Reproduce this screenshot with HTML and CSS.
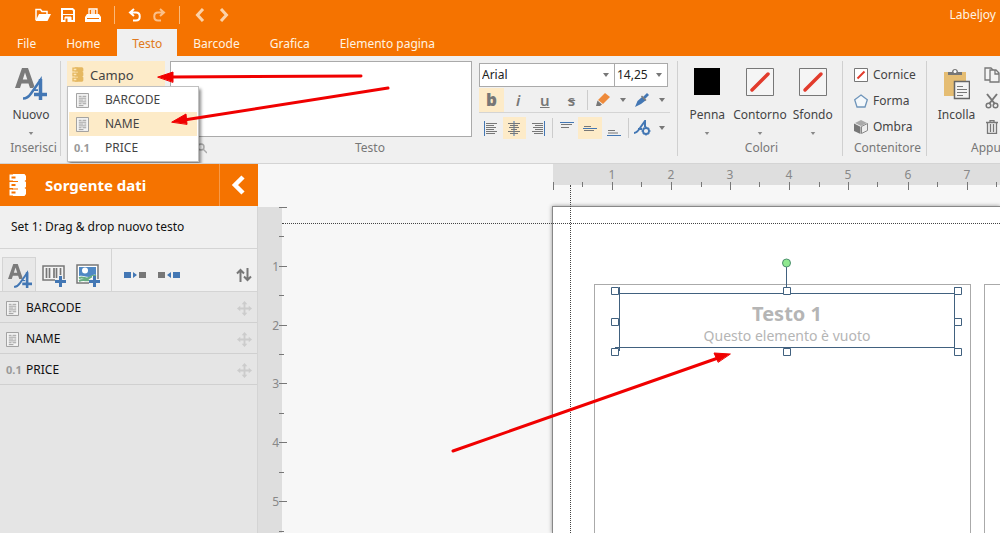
FILE: index.html
```html
<!DOCTYPE html>
<html lang="it">
<head>
<meta charset="utf-8">
<title>Labeljoy</title>
<link rel="stylesheet" href="styles.css">
</head>
<body>
<svg class="defs" aria-hidden="true">
  <symbol id="i-text-add" viewBox="0 0 32 32">
    <path d="M0 20 7 0h6l7 20h-5l-1.500-4.500h-7L5 20zM7.800 11.500h4.500L10 4.500z" fill="#7b7b7b" fill-rule="evenodd"/>
    <path d="M9 31c4 0 6-2 8-5l8-11.500V27" fill="none" stroke="#f0f0f0" stroke-width="5"/>
    <path d="M8 30.500c4 0 6-2 8-5L25.500 12v15M18 22.500h8" fill="none" stroke="#4377b4" stroke-width="2.500"/>
    <path d="M26 19v13M19 26h13" stroke="#f0f0f0" stroke-width="6"/>
    <path d="M25.500 11v21M19 26.500h13" stroke="#4377b4" stroke-width="3.500"/>
  </symbol>
  <symbol id="i-doc" viewBox="0 0 14 16">
    <path d="M.5.5h13v15H.5z" fill="#f4f4f4" stroke="#999"/>
    <path d="M3 3.500h3M7 3.500h4M3 5.500h8M3 7.500h5M9 7.500h2M3 9.500h8M3 11.500h3M7 11.500h4M3 13.500h5" stroke="#999"/>
  </symbol>
  <symbol id="i-data" viewBox="0 0 18 22">
    <path d="M4 0h11.500l1.500 2v4l-1.500 1L17 8v5l-1.500 1 1.500 1v5l-1.500 2H4z"/>
    <path d="M.5.500h8v6h-8zM.5 8h8v6h-8zM.5 15.500h8v6h-8z"/>
    <path d="M2.500 2.500h4v2h-4zM2.500 10h4v2h-4zM2.500 17.500h4v2h-4zM3 7h6v1H3zM3 14.500h6v1H3z" fill="currentColor"/>
  </symbol>
  <symbol id="i-caret" viewBox="0 0 8 4"><path d="M1 0h6L4 4z"/></symbol>
  <symbol id="i-move" viewBox="0 0 16 16"><path d="M8 0l3 3.500H9V7h3.500V5L16 8l-3.500 3V9H9v3.500h2L8 16l-3-3.500h2V9H3.500v2L0 8l3.500-3v2H7V3.500H5z"/></symbol>
  <symbol id="i-none" viewBox="0 0 28 28"><path d="M.5.5h27v27H.5z" fill="#f5f5f5" stroke="#777"/><path d="M6 22 22 6" stroke="#e23b2c" stroke-width="3.500" stroke-linecap="round"/></symbol>
</svg>

<header class="top">
  <div class="quick">
    <button aria-label="Apri"><svg width="16" height="14" viewBox="0 0 16 14"><path d="M1 12V1.500h4.500l1.500 2h5V6" fill="none" stroke="#fff" stroke-width="1.500"/><path d="M4 6h12l-3.500 7H.5z" fill="#fff"/></svg></button>
    <button aria-label="Salva"><svg width="14" height="14" viewBox="0 0 14 14"><path d="M1 1h10.500L13 2.500V13H1z" fill="none" stroke="#fff" stroke-width="2"/><path d="M2 6.500h10M4 9h6v5H4z" fill="#fff" stroke="#fff"/><path d="M5.500 10.500V14" stroke="#f57300" stroke-width="2"/></svg></button>
    <button aria-label="Stampa"><svg width="16" height="14" viewBox="0 0 16 14"><path d="M4 6V1h8v5M6 3h4M6 5h4" fill="none" stroke="#fff" stroke-width="1.300"/><path d="M2 6h12l2 3v5H0V9z" fill="#fff"/><path d="M2 10.500h12" stroke="#f57300"/></svg></button>
    <span class="bar"></span>
    <button aria-label="Annulla"><svg width="14" height="14" viewBox="0 0 14 14" fill="none" stroke="#fff" stroke-width="2"><path d="M6 1 2 4.500 6 8M2 4.500h6c5 0 5 8 0 8H5"/></svg></button>
    <button aria-label="Ripeti"><svg width="14" height="14" viewBox="0 0 14 14" fill="none" stroke="#fbc08a" stroke-width="2"><path d="m8 1 4 3.500L8 8M12 4.500H6c-5 0-5 8 0 8h3"/></svg></button>
    <span class="bar"></span>
    <button class="arrow" aria-label="Precedente"><svg width="10" height="14" viewBox="0 0 10 14" fill="none" stroke="#fcd2a8" stroke-width="3"><path d="M8 1 2.500 7 8 13"/></svg></button>
    <button class="arrow" aria-label="Successivo"><svg width="10" height="14" viewBox="0 0 10 14" fill="none" stroke="#fcd2a8" stroke-width="3"><path d="m2 1 5.500 6L2 13"/></svg></button>
    <span class="app-name">Labeljoy</span>
  </div>
  <nav class="tabs">
    <button>File</button><button>Home</button><button class="active">Testo</button><button>Barcode</button><button>Grafica</button><button>Elemento pagina</button>
  </nav>
</header>

<section class="ribbon">
  <div class="group insert">
    <button class="big">
      <svg width="32" height="32"><use href="#i-text-add"/></svg>
      <span>Nuovo</span>
      <svg class="caret" width="6" height="3"><use href="#i-caret"/></svg>
    </button>
    <div class="caption">Inserisci</div>
  </div>

  <div class="group text">
    <div class="text-tools">
      <div class="field">
        <button class="field-button"><svg width="12" height="15" fill="#e5b860" color="#fde5b8"><use href="#i-data"/></svg>Campo</button>
        <div class="menu">
          <button><svg width="13" height="15"><use href="#i-doc"/></svg>BARCODE</button>
          <button class="hot"><svg width="13" height="15"><use href="#i-doc"/></svg>NAME</button>
          <button><span class="num">0.1</span>PRICE</button>
        </div>
      </div>
      <textarea class="content" aria-label="Testo"></textarea>
      <div class="font">
        <div class="selects">
          <span class="select family"><select aria-label="Carattere"><option>Arial</option></select><svg width="8" height="4"><use href="#i-caret"/></svg></span>
          <span class="select size"><select aria-label="Dimensione"><option>14,25</option></select><svg width="8" height="4"><use href="#i-caret"/></svg></span>
        </div>
        <div class="tools styles">
          <button class="on glyph"><b>b</b></button><button class="glyph"><i>i</i></button><button class="glyph"><u>u</u></button><button class="glyph"><s>s</s></button>
          <span class="sep"></span>
          <button aria-label="Evidenziatore"><svg width="14" height="14" viewBox="0 0 14 14"><path d="M9 0l5 4-7 7-5-4z" fill="#ee8a3a"/><path d="M1.500 7.500l4.500 4-2 1.500H0z" fill="#777"/></svg></button>
          <button class="drop" aria-label="Colori evidenziatore"><svg width="8" height="4"><use href="#i-caret"/></svg></button>
          <button aria-label="Colore"><svg width="14" height="14" viewBox="0 0 14 14"><path d="M8 4l4-4 2 2-4 4z" fill="#4377b4"/><path d="M7 4l3.500 3.500L6 11l-6 3 2.500-6z" fill="#4377b4"/><path d="m6.500 3 4.500 4.500" stroke="#777" stroke-width="1.500"/></svg></button>
          <button class="drop" aria-label="Colori testo"><svg width="8" height="4"><use href="#i-caret"/></svg></button>
        </div>
        <div class="tools aligns">
          <button aria-label="Sinistra"><svg width="14" height="15" viewBox="0 0 14 15"><path d="M.5 0v15" stroke="#4377b4"/><path d="M2 2.500h11M2 4.500h8M2 6.500h10M2 8.500h8M2 10.500h11M2 12.500h9" stroke="#777"/></svg></button>
          <button class="on" aria-label="Centro"><svg width="14" height="15" viewBox="0 0 14 15"><path d="M7 0v15" stroke="#4377b4"/><path d="M1 2.500h12M3 4.500h8M2 6.500h10M4 8.500h6M1 10.500h12M3 12.500h8" stroke="#777"/></svg></button>
          <button aria-label="Destra"><svg width="14" height="15" viewBox="0 0 14 15"><path d="M13.500 0v15" stroke="#4377b4"/><path d="M1 2.500h11M4 4.500h8M2 6.500h10M4 8.500h8M1 10.500h11M3 12.500h9" stroke="#777"/></svg></button>
          <span class="sep"></span>
          <button aria-label="Alto"><svg width="14" height="15" viewBox="0 0 14 15"><path d="M0 1.500h14" stroke="#4377b4"/><path d="M1 3.500h11M1 6.500h8" stroke="#777"/></svg></button>
          <button class="on" aria-label="Mezzo"><svg width="14" height="15" viewBox="0 0 14 15"><path d="M0 7.500h14" stroke="#4377b4"/><path d="M1 5.500h7M1 9.500h10" stroke="#777"/></svg></button>
          <button aria-label="Basso"><svg width="14" height="15" viewBox="0 0 14 15"><path d="M0 14.500h14" stroke="#4377b4"/><path d="M1 9.500h7M1 12h10" stroke="#777"/></svg></button>
          <span class="sep"></span>
          <button aria-label="Opzioni testo"><svg width="17" height="16" viewBox="0 0 17 16" fill="none" stroke="#4377b4"><path d="M0 13c3 0 4-2 6-5l5-7v6M4 9h4" stroke-width="2"/><circle cx="12" cy="11" r="3" stroke-width="1.800"/><path d="M12 6.500v2M12 13.500v2M7.500 11h2M14.500 11h2M9 8l1 1M14 13l1 1M15 8l-1 1M9 14l1-1" stroke-width="1.500"/></svg></button>
          <button class="drop" aria-label="Altre opzioni"><svg width="8" height="4"><use href="#i-caret"/></svg></button>
        </div>
      </div>
    </div>
    <div class="text-foot">
      <svg width="10" height="11" viewBox="0 0 10 11" fill="none" stroke="#aaa" stroke-width="1.500"><circle cx="4" cy="4" r="3"/><path d="m6 6 4 4"/></svg>
      <div class="caption">Testo</div>
    </div>
  </div>

  <div class="group colors">
    <div class="row">
      <button class="big"><span class="swatch"></span><span>Penna</span><svg class="caret" width="6" height="3"><use href="#i-caret"/></svg></button>
      <button class="big"><svg width="28" height="28"><use href="#i-none"/></svg><span>Contorno</span><svg class="caret" width="6" height="3"><use href="#i-caret"/></svg></button>
      <button class="big"><svg width="28" height="28"><use href="#i-none"/></svg><span>Sfondo</span><svg class="caret" width="6" height="3"><use href="#i-caret"/></svg></button>
    </div>
    <div class="caption">Colori</div>
  </div>

  <div class="group box">
    <div class="list">
      <button><svg width="14" height="14" viewBox="0 0 14 14"><path d="M.5.5h13v13H.5z" fill="#fff" stroke="#777"/><path d="m3.500 10.500 7-7" stroke="#e23b2c" stroke-width="2"/></svg>Cornice</button>
      <button><svg width="14" height="14" viewBox="0 0 14 14"><path d="m7 1 6.300 4.800L11 13H3L.7 5.800z" fill="#f4f8fb" stroke="#6f95ba" stroke-width="1.300"/></svg>Forma</button>
      <button><svg width="14" height="14" viewBox="0 0 14 14"><path d="m7 0 6 3-6 3-6-3z" fill="#aaa"/><path d="m0 3.500 6.500 3.300V14L0 11z" fill="#777"/><path d="m13.500 3.500-6 3V13.500l6-3z" fill="#eee" stroke="#888"/></svg>Ombra</button>
    </div>
    <div class="caption">Contenitore</div>
  </div>

  <div class="group clip">
    <div class="row">
      <button class="big"><svg width="26" height="32" viewBox="0 0 26 32"><path d="M0 4h22v24H0z" fill="#e5bd73"/><path d="M4 7V4h4c0-4 6-4 6 0h4v3z" fill="#777"/><circle cx="11" cy="3.500" r="1.500" fill="#fff"/><path d="M10.500 13.500h15v17h-15z" fill="#f4f4f4" stroke="#666" stroke-width="1.500"/><path d="M13 18.500h6M13 21.500h10M13 24.500h10M13 27.500h6" stroke="#777"/></svg><span>Incolla</span></button>
      <div class="list">
        <button aria-label="Copia"><svg width="16" height="16" viewBox="0 0 16 16" fill="#f4f4f4" stroke="#777" stroke-width="1.300"><path d="M1 1h6l3 3v9H1z"/><path d="M6 3h6l3 3v9H6zM11 3v4h4"/></svg></button>
        <button aria-label="Taglia"><svg width="14" height="16" viewBox="0 0 14 16" fill="none" stroke="#777" stroke-width="2"><path d="m2 1 8 10M12 1 4 11"/><circle cx="3.500" cy="12.500" r="2.300" stroke-width="1.500"/><circle cx="10.500" cy="12.500" r="2.300" stroke-width="1.500"/></svg></button>
        <button aria-label="Elimina"><svg width="12" height="14" viewBox="0 0 12 14" fill="none" stroke="#777" stroke-width="1.300"><path d="M0 2.500h12M4 2V.7h4V2M1.500 3v10.300h9V3M4.500 4v8M7.500 4v8"/></svg></button>
      </div>
    </div>
    <div class="caption">Appunti</div>
  </div>
</section>

<main class="main">
  <aside class="side">
    <div class="side-head">
      <svg width="18" height="22" fill="#fff" color="#f57300"><use href="#i-data"/></svg>
      <h1>Sorgente dati</h1>
      <button aria-label="Chiudi pannello"><svg width="14" height="20" viewBox="0 0 14 20" fill="none" stroke="#fff" stroke-width="4.500"><path d="M12 2 4 10l8 8"/></svg></button>
    </div>
    <p class="set">Set 1: Drag &amp; drop nuovo testo</p>
    <div class="side-tools">
      <div class="kinds">
        <button class="current" aria-label="Testo"><svg width="24" height="24"><use href="#i-text-add"/></svg></button>
        <button aria-label="Barcode"><svg width="24" height="24" viewBox="0 0 24 24"><path d="M1 3h21v14H1z" fill="#f4f4f4" stroke="#777" stroke-width="1.500"/><path d="M4.500 5v10M7.500 5v10M12 5v10M14.500 5v10M18.500 5v10" stroke="#777" stroke-width="1.700"/><path d="M18.500 12v12M13 18.500h11" stroke="#f0f0f0" stroke-width="5"/><path d="M18.500 13v11M13 18.500h11" stroke="#4377b4" stroke-width="3"/></svg></button>
        <button aria-label="Immagine"><svg width="24" height="24" viewBox="0 0 24 24"><path d="M1 2h21v18H1z" fill="#fff" stroke="#777" stroke-width="1.500"/><path d="M3 4h17v8c-3-2-4 2-7 2s-6-2-10-1z" fill="#4f88c4"/><circle cx="9" cy="7.500" r="3" fill="#fff"/><path d="M3 15c5-2 6 2 10 0s4-3 7-2M3 18c4-2 7 0 10-1" fill="none" stroke="#67ad82" stroke-width="2"/><path d="M18.500 13v11M13 18.500h11" stroke="#f0f0f0" stroke-width="5"/><path d="M18.500 13v11M13 18.500h11" stroke="#4377b4" stroke-width="3"/></svg></button>
      </div>
      <button aria-label="Espandi"><svg width="22" height="8" viewBox="0 0 22 8"><path d="M0 1h7v6H0zM9 1l4 3-4 3z" fill="#4377b4"/><path d="M15 1h7v6h-7z" fill="#777"/></svg></button>
      <button aria-label="Comprimi"><svg width="22" height="8" viewBox="0 0 22 8"><path d="M15 1h7v6h-7zM13 1 9 4l4 3z" fill="#4377b4"/><path d="M0 1h7v6H0z" fill="#777"/></svg></button>
      <button class="sort" aria-label="Ordina"><svg width="16" height="14" viewBox="0 0 16 14" fill="none" stroke="#777" stroke-width="2"><path d="M4.500 14V2M1 5.500 4.500 2 8 5.500M11.500 0v12M8 8.500l3.500 3.500L15 8.500"/></svg></button>
    </div>
    <ul class="fields">
      <li><span class="kind"><svg width="13" height="15"><use href="#i-doc"/></svg></span>BARCODE<svg class="move" width="15" height="15"><use href="#i-move"/></svg></li>
      <li><span class="kind"><svg width="13" height="15"><use href="#i-doc"/></svg></span>NAME<svg class="move" width="15" height="15"><use href="#i-move"/></svg></li>
      <li><span class="kind num">0.1</span>PRICE<svg class="move" width="15" height="15"><use href="#i-move"/></svg></li>
    </ul>
  </aside>

  <section class="stage">
    <div class="ruler across"></div>
    <div class="ruler down"></div>
    <div class="sheet">
      <div class="label first"></div>
      <div class="label second"></div>
    </div>
    <svg class="marks" aria-hidden="true">
      <path d="M295.500 18v8M354.500 18v8M413.500 18v8M472.500 18v8M531.500 18v8M590.500 18v8M650.500 18v8M709.500 18v8M324.500 18v5M383.500 18v5M443.500 18v5M501.500 18v5M561.500 18v5M619.500 18v5M679.500 18v5M738.500 18v5"/>
      <path d="M21 43.500h8M21 102.500h8M21 161.500h8M21 219.500h8M21 278.500h8M21 337.500h8M21 72.500h5M21 131.500h5M21 190.500h5M21 249.500h5M21 308.500h5M21 367.500h5"/>
      <g text-anchor="middle"><text x="354" y="15">1</text><text x="413" y="15">2</text><text x="472" y="15">3</text><text x="531" y="15">4</text><text x="590" y="15">5</text><text x="650" y="15">6</text><text x="709" y="15">7</text></g>
      <g text-anchor="end"><text x="21" y="107">1</text><text x="21" y="166">2</text><text x="21" y="224">3</text><text x="21" y="283">4</text><text x="21" y="342">5</text></g>
    </svg>
    <div class="guide horizontal"></div>
    <div class="guide vertical"></div>
    <div class="element">
      <strong>Testo 1</strong>
      <span>Questo elemento è vuoto</span>
      <svg class="handles" width="352" height="100" viewBox="0 0 352 100" aria-hidden="true">
        <path d="M4 35.500h340M4 89.500h340M8.500 29v64M343.500 29v64M175.500 5v24"/>
        <path d="M.5 29.500h7v7h-7zM.5 60.500h7v7h-7zM.5 90.500h7v7h-7zM172.500 29.500h7v7h-7zM172.500 90.500h7v7h-7zM343.500 29.500h7v7h-7zM343.500 60.500h7v7h-7zM343.500 90.500h7v7h-7z" fill="#fff"/>
        <circle cx="175.500" cy="5" r="4" fill="#8fe88f" stroke="#4d8f6f"/>
      </svg>
    </div>
  </section>
</main>

<svg class="pointers" width="760" height="500" aria-hidden="true">
  <path d="M361 76 170 77M388 88 184 120M453 451 718 358"/>
  <path class="tip" d="m158 77 15-5v10zM172 122l14-8 1 10zM730 354l-16-1 4 9z"/>
</svg>
</body>
</html>
```
FILE: styles.css
```css
* { box-sizing: border-box; }

body {
  margin: 0;
  height: 100vh;
  display: flex;
  flex-direction: column;
  overflow: hidden;
  background: #f0f0f0;
  color: #444;
  font: 12px/16px "Noto Sans", "Open Sans", sans-serif;
}

button {
  display: flex;
  align-items: center;
  justify-content: center;
  margin: 0;
  padding: 0;
  border: 0;
  background: none;
  color: inherit;
  font: inherit;
}

svg { display: block; flex: none; }
.defs { position: absolute; width: 0; height: 0; }

/* Title bar and tabs */
.top { background: #f57300; color: #fff3e3; }

.quick {
  display: flex;
  align-items: center;
  gap: 10px;
  height: 29px;
  padding: 0 4px 0 35px;
}
.bar { width: 1px; height: 18px; margin: 0 3px; background: #fbb877; }
.quick .arrow { margin: 0 2px; }
.app-name { margin-left: auto; }

.tabs { display: flex; padding-left: 2px; }
.tabs button { height: 27px; padding: 3px 15px 0; }
.tabs .active { margin: 0 1px 0 2px; background: #f0f0f0; color: #e07a20; }

/* Ribbon */
.ribbon {
  display: flex;
  height: 108px;
  padding-top: 5px;
  overflow: hidden;
  border-bottom: 1px solid #d4d4d4;
}
.group {
  position: relative;
  display: flex;
  flex: none;
  flex-direction: column;
  justify-content: space-between;
  height: 95px;
  border-right: 1px solid #d0d0d0;
}
.caption { text-align: center; color: #777; }
.row { display: flex; }

.big { flex-direction: column; justify-content: flex-start; padding-top: 7px; height: 76px; }
.big > :first-child { height: 32px; }
.big span:not(.swatch) { margin-top: 6px; line-height: 18px; }
.caret { margin-top: 8px; fill: #888; }

.insert { width: 61px; padding-left: 2px; }
.insert .caption { padding-left: 5px; white-space: nowrap; }

.text { width: 617px; padding-left: 6px; }
.text-tools { display: flex; gap: 5px; }
.field { position: relative; width: 98px; }
.field-button {
  width: 98px;
  height: 25px;
  gap: 6px;
  padding: 2px 0 0 5px;
  justify-content: flex-start;
  background: #fdebc8;
  font-size: 13px;
}
.menu {
  position: absolute;
  z-index: 2;
  top: 25px;
  left: 0;
  width: 132px;
  padding: 1px;
  border: 1px solid #c0c0c0;
  background: #fff;
  box-shadow: 2px 3px 3px rgba(0, 0, 0, .45);
}
.menu button {
  width: 100%;
  height: 24px;
  gap: 16px;
  padding-left: 7px;
  justify-content: flex-start;
}
.menu .hot { background: #fdebc8; }
.num { color: #999; font-size: 11px; font-weight: bold; }
.menu .num { width: 13px; margin-left: -2px; margin-right: 2px; }

.content {
  width: 302px;
  height: 76px;
  resize: none;
  border: 1px solid #aaa;
  background: #fff;
}

.font { width: 193px; padding: 2px 0 0 2px; }
.selects { display: flex; }
.select { position: relative; display: flex; align-items: center; }
.family { width: 136px; }
.size { width: 54px; margin-left: -1px; }
.select select {
  width: 100%;
  height: 24px;
  padding: 0 2px;
  border: 1px solid #aaa;
  border-radius: 0;
  background: #fff;
  color: #222;
  font: inherit;
  appearance: none;
}
.select svg { position: absolute; right: 5px; fill: #777; }

.tools { display: flex; align-items: center; height: 25px; }
.tools button { width: 24px; height: 24px; }
.tools .drop { width: 16px; fill: #777; }
.tools .on { background: #fdebc8; }
.styles { gap: 2px; border-bottom: 1px solid #d4d4d4; height: 26px; }
.styles .glyph { width: 25px; }
.styles .sep { margin: 0 3px 0 1px; }
.styles button:not(.glyph):not(.drop) { width: 20px; }
.glyph { color: #777; font-size: 15px; font-weight: 600; }
.glyph b { font-size: 17px; }
.aligns { height: 29px; margin-bottom: -6px; padding-top: 1px; }
.aligns .on { height: 22px; }
.sep { width: 1px; height: 20px; margin: 0 2px; background: #ccc; }

.text-foot { position: relative; }
.text-foot svg { position: absolute; left: 130px; top: 3px; }
.text-foot .caption { padding-right: 4px; }

.colors { width: 165px; padding: 0 3px 0 3px; }
.colors .big { width: 53px; }
.colors .caption { padding-left: 3px; }
.colors .big > svg:first-child { height: 28px; margin-bottom: 4px; }
.colors .big > .swatch { width: 26px; height: 28px; margin-bottom: 4px; background: #000; border-bottom: 1px solid #f0f0f0; }

.list { display: flex; flex-direction: column; }
.list button { height: 26px; gap: 5px; justify-content: flex-start; }
.box { width: 84px; padding-left: 11px; }
.box .list { padding-top: 1px; }
.box .caption { text-align: left; }

.clip { flex: 1 0 90px; padding-left: 10px; border: 0; }
.clip .row { gap: 8px; }
.clip .list { padding-top: 1px; }
.clip .big { width: 39px; }
.clip .list button { width: 16px; justify-content: center; }
.clip .caption { text-align: left; padding-left: 34px; }

/* Side panel */
.main { display: flex; flex: 1; min-height: 0; }
.side { width: 258px; flex: none; background: #e5e5e5; border-right: 1px solid #d4d4d4; color: #111; }
.side-head {
  display: flex;
  align-items: center;
  height: 42px;
  margin-right: -1px;
  padding-left: 9px;
  background: #f57300;
  color: #fff;
}
.side-head h1 { flex: 1; margin: 0 0 0 18px; font-size: 15px; line-height: 20px; }
.side-head button { width: 39px; height: 42px; padding-right: 2px; border-left: 1px solid #f89a47; }
.set { margin: 0; padding: 13px 11px; background: #f0f0f0; border-bottom: 1px solid #d4d4d4; }
.side-tools {
  display: flex;
  align-items: center;
  gap: 12px;
  height: 43px;
  padding-right: 5px;
  background: #f0f0f0;
  border-bottom: 1px solid #d4d4d4;
}
.side-tools > button { padding-top: 9px; }
.kinds { display: flex; align-items: flex-end; align-self: stretch; width: 112px; padding-left: 2px; border-right: 1px solid #d4d4d4; }
.kinds button { width: 34px; height: 34px; padding: 2px 0 0 2px; }
.kinds .current { border: 1px solid #d4d4d4; border-bottom: 0; background: #e8e8e8; }
.sort { margin-left: auto; }

.fields { margin: 0; padding: 0; list-style: none; }
.fields li {
  display: flex;
  align-items: center;
  height: 31px;
  padding: 2px 5px 0 6px;
  border-bottom: 1px solid #d0d0d0;
}
.kind { width: 20px; }
.move { margin-left: auto; fill: #ccc; }

/* Design canvas: everything is placed at its own coordinates */
.stage { position: relative; flex: 1; min-width: 0; overflow: hidden; background: #f7f7f7; }
.ruler { position: absolute; background: #dedede; }
.across { left: 295px; right: 0; top: 0; height: 21px; }
.down { left: 0; top: 43px; bottom: 0; width: 24px; }
.marks { position: absolute; inset: 0; width: 100%; height: 100%; }
.marks path { stroke: #777; }
.marks text { fill: #888; font-size: 12px; }
.sheet {
  position: absolute;
  left: 294px;
  top: 42px;
  right: 0;
  bottom: 0;
  overflow: hidden;
  border: solid #888;
  border-width: 1px 0 0 1px;
  background: #fff;
  box-shadow: 0 0 4px rgba(0, 0, 0, .4);
}
.label { position: absolute; top: 77px; bottom: -2px; border: 1px solid #aaa; }
.first { left: 41px; width: 377px; }
.second { left: 431px; width: 377px; }
.guide { position: absolute; }
.horizontal { left: 24px; right: 0; top: 59px; border-top: 1px dotted #444; }
.vertical { left: 312px; top: 21px; bottom: 0; border-left: 1px dotted #444; }
.element {
  position: absolute;
  left: 353px;
  top: 94px;
  width: 352px;
  display: flex;
  flex-direction: column;
  align-items: center;
  padding-top: 44px;
  color: #b5b5b5;
}
.element strong { font-size: 20px; line-height: 24px; }
.element span { font-size: 14px; line-height: 20px; }
.handles { position: absolute; left: 0; top: 0; fill: none; stroke: #41617f; }

/* Annotation arrows over the whole window */
.pointers { position: absolute; z-index: 3; left: 0; top: 0; pointer-events: none; fill: none; stroke: #f00000; stroke-width: 3; stroke-linecap: round; }
.pointers .tip { fill: #f00000; stroke-width: 1; }
```
